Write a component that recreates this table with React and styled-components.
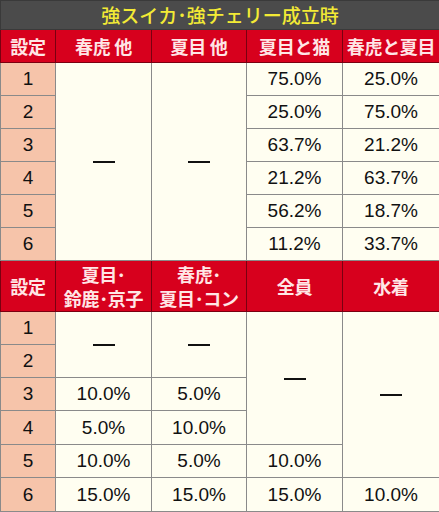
import React from 'react';
import styled, { createGlobalStyle } from 'styled-components';

const GlobalStyle = createGlobalStyle`
  body {
    margin: 0;
    background: #ffffff;
  }
`;

const Table = styled.table`
  width: 439px;
  border-collapse: collapse;
  table-layout: fixed;
  font-family: 'Liberation Sans', sans-serif;
`;

const Row = styled.tr`
  height: ${(p) => p.h}px;
`;

const TitleCell = styled.th`
  padding: 0;
  background: #4b4b4b;
  color: #f3ea35;
  font-family: 'Noto Sans CJK JP', sans-serif;
  font-weight: 500;
  font-size: 19px;
  line-height: 22px;
  border: 1px solid #3a3a3a;
`;

const HeadCell = styled.th`
  padding: 0;
  background: #d7001d;
  color: #ffe6e6;
  font-family: 'Noto Sans CJK JP', sans-serif;
  font-weight: 700;
  font-size: 18px;
  line-height: 24px;
  border: 1px solid #7a0010;
  white-space: nowrap;
  letter-spacing: -0.3px;
`;

const SetCell = styled.td`
  padding: 0;
  text-align: center;
  background: #f6c4aa;
  color: #111;
  font-size: 19px;
  line-height: 22px;
  border: 1px solid #8a8a8a;
`;

const Cell = styled.td`
  padding: 0;
  text-align: center;
  background: #fffef1;
  color: #111;
  font-size: 19px;
  line-height: 22px;
  border: 1px solid #8a8a8a;
`;

const Dash = styled.span`
  display: inline-block;
  width: 22px;
  height: 2px;
  background: #111;
  vertical-align: middle;
`;

const top = [
  ['75.0%', '25.0%'],
  ['25.0%', '75.0%'],
  ['63.7%', '21.2%'],
  ['21.2%', '63.7%'],
  ['56.2%', '18.7%'],
  ['11.2%', '33.7%'],
];

const App = () => (
  <>
    <GlobalStyle />
    <Table>
      <colgroup>
        <col style={{ width: 55 }} />
        <col style={{ width: 96 }} />
        <col style={{ width: 95 }} />
        <col style={{ width: 96 }} />
        <col style={{ width: 97 }} />
      </colgroup>
      <tbody>
        <Row h={29}>
          <TitleCell colSpan={5}>強スイカ･強チェリー成立時</TitleCell>
        </Row>
        <Row h={33}>
          <HeadCell>設定</HeadCell>
          <HeadCell>春虎 他</HeadCell>
          <HeadCell>夏目 他</HeadCell>
          <HeadCell>夏目と猫</HeadCell>
          <HeadCell>春虎と夏目</HeadCell>
        </Row>
        {top.map((r, i) => (
          <Row h={33} key={i}>
            <SetCell>{i + 1}</SetCell>
            {i === 0 && (
              <>
                <Cell rowSpan={6}><Dash /></Cell>
                <Cell rowSpan={6}><Dash /></Cell>
              </>
            )}
            <Cell>{r[0]}</Cell>
            <Cell>{r[1]}</Cell>
          </Row>
        ))}
        <Row h={51}>
          <HeadCell>設定</HeadCell>
          <HeadCell>夏目･<br />鈴鹿･京子</HeadCell>
          <HeadCell>春虎･<br />夏目･コン</HeadCell>
          <HeadCell>全員</HeadCell>
          <HeadCell>水着</HeadCell>
        </Row>
        <Row h={33}>
          <SetCell>1</SetCell>
          <Cell rowSpan={2}><Dash /></Cell>
          <Cell rowSpan={2}><Dash /></Cell>
          <Cell rowSpan={4}><Dash /></Cell>
          <Cell rowSpan={5}><Dash /></Cell>
        </Row>
        <Row h={33}>
          <SetCell>2</SetCell>
        </Row>
        <Row h={33}>
          <SetCell>3</SetCell>
          <Cell>10.0%</Cell>
          <Cell>5.0%</Cell>
        </Row>
        <Row h={34}>
          <SetCell>4</SetCell>
          <Cell>5.0%</Cell>
          <Cell>10.0%</Cell>
        </Row>
        <Row h={33}>
          <SetCell>5</SetCell>
          <Cell>10.0%</Cell>
          <Cell>5.0%</Cell>
          <Cell>10.0%</Cell>
        </Row>
        <Row h={34}>
          <SetCell>6</SetCell>
          <Cell>15.0%</Cell>
          <Cell>15.0%</Cell>
          <Cell>15.0%</Cell>
          <Cell>10.0%</Cell>
        </Row>
      </tbody>
    </Table>
  </>
);

export default App;
